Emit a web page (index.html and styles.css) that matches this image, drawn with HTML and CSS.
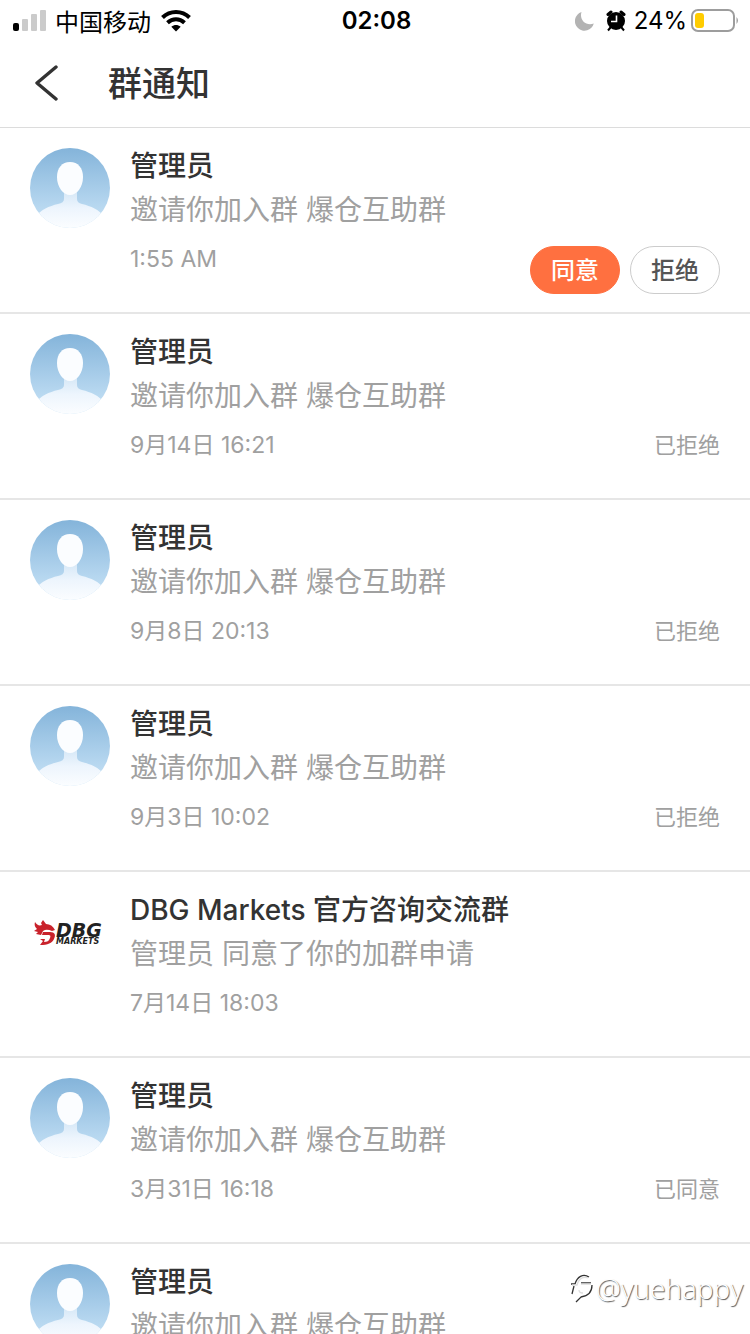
FILE: index.html
```html
<!DOCTYPE html>
<html lang="zh-CN">
<head>
<meta charset="utf-8">
<meta name="viewport" content="width=device-width, initial-scale=1">
<title>群通知</title>
<link rel="stylesheet" href="styles.css">
</head>
<body>
<svg class="defs" width="0" height="0" aria-hidden="true">
  <defs>
    <linearGradient id="sky" x1="0" y1="0" x2="0" y2="1">
      <stop offset="0" stop-color="#84b4da"/>
      <stop offset="0.7" stop-color="#b5d6ef"/>
      <stop offset="1" stop-color="#c8e2f5"/>
    </linearGradient>
    <linearGradient id="torso" gradientUnits="userSpaceOnUse" x1="0" y1="44" x2="0" y2="80">
      <stop offset="0" stop-color="#d6e8f7"/>
      <stop offset="0.45" stop-color="#edf5fd"/>
      <stop offset="1" stop-color="#fbfdff"/>
    </linearGradient>
    <clipPath id="round"><circle cx="40" cy="40" r="40"/></clipPath>
    <symbol id="person" viewBox="0 0 80 80">
      <g clip-path="url(#round)">
        <rect width="80" height="80" fill="url(#sky)"/>
        <path d="M34 42h13v9q0 4 5 5c9 2 17 6 22 12v14H6V68c5-6 13-10 22-12q6-1 6-5z" fill="url(#torso)"/>
        <path d="M40 14c8 0 13 6 13 15 0 10-6 18-13 18s-13-8-13-18c0-9 5-15 13-15z" fill="#fbfdff"/>
      </g>
    </symbol>
  </defs>
</svg>
<div class="app">
  <div class="status">
    <div class="status-side">
      <svg class="signal" width="34" height="22" viewBox="0 0 34 22"><rect x="0" y="13" width="6" height="8" rx="2"/><g fill="#cbcbcb"><rect x="9" y="9" width="6" height="12" rx="1"/><rect x="18" y="4" width="6" height="17" rx="1"/><rect x="27" y="0" width="6" height="21" rx="1"/></g></svg>
      <span class="carrier">中国移动</span>
      <svg width="30" height="22" viewBox="0 0 30 22" fill="none" stroke="#000" stroke-width="4"><path d="M1.500 7.500C9 .2 21 .2 28.500 7.500"/><path d="M6.500 12.700c5-4.600 12-4.600 17 0"/><path d="M10.300 16.800c3-2.500 6.400-2.500 9.400 0L15 21.500z" fill="#000" stroke="none"/></svg>
    </div>
    <time class="clock">02:08</time>
    <div class="status-side status-right">
      <svg width="20" height="20" viewBox="0 0 20 20"><path d="M6.500 1A9.600 9.600 0 1 0 18.800 12.600C11 15.500 4 9 6.500 1z" fill="#b3b3b3"/></svg>
      <svg class="alarm" width="20" height="22" viewBox="0 0 20 22"><circle cx="10" cy="11" r="9"/><path d="M2 4.500 5 2M18 4.500 15 2" stroke="#000" stroke-width="3" stroke-linecap="round"/><path d="m4.500 17.500-2.500 3M15.500 17.500l2.500 3" stroke="#000" stroke-width="2"/><path d="M10.500 5.500v6H5" fill="none" stroke="#fff" stroke-width="1.600"/></svg>
      <span class="percent">24%</span>
      <svg width="49" height="24" viewBox="0 0 49 24"><rect x="1" y="1" width="42" height="21" rx="6" fill="#fff" stroke="#9d9d9d" stroke-width="2"/><rect x="4" y="4" width="9" height="15" rx="3" fill="#fc0"/><path d="M45.500 8q3 3.500 0 7z" fill="#9d9d9d"/></svg>
    </div>
  </div>
  <header class="header">
    <button class="back" aria-label="返回"><svg width="26" height="38" viewBox="0 0 26 38" fill="none" stroke="#333" stroke-width="3.400" stroke-linecap="round" stroke-linejoin="round"><path d="M22 2 3 18l19 16"/></svg></button>
    <h1 class="heading">群通知</h1>
  </header>
  <main class="list">
    <article class="item">
      <svg class="avatar" aria-hidden="true"><use href="#person"/></svg>
      <div class="body"><h2 class="title">管理员</h2><p class="text">邀请你加入群 爆仓互助群</p>
      <div class="foot"><time class="meta date">1:55 AM</time><div class="actions"><button class="pill accept">同意</button><button class="pill">拒绝</button></div></div></div>
    </article>
    <article class="item">
      <svg class="avatar" aria-hidden="true"><use href="#person"/></svg>
      <div class="body"><h2 class="title">管理员</h2><p class="text">邀请你加入群 爆仓互助群</p>
      <div class="foot"><time class="meta date">9月14日 16:21</time><span class="meta">已拒绝</span></div></div>
    </article>
    <article class="item">
      <svg class="avatar" aria-hidden="true"><use href="#person"/></svg>
      <div class="body"><h2 class="title">管理员</h2><p class="text">邀请你加入群 爆仓互助群</p>
      <div class="foot"><time class="meta date">9月8日 20:13</time><span class="meta">已拒绝</span></div></div>
    </article>
    <article class="item">
      <svg class="avatar" aria-hidden="true"><use href="#person"/></svg>
      <div class="body"><h2 class="title">管理员</h2><p class="text">邀请你加入群 爆仓互助群</p>
      <div class="foot"><time class="meta date">9月3日 10:02</time><span class="meta">已拒绝</span></div></div>
    </article>
    <article class="item">
      <svg class="avatar" viewBox="0 0 80 80" role="img" aria-label="DBG Markets">
        <path d="M5 30c2 3 4 4 7 3l-1-2 2-3 3 4c4 0 7 2 9 6l-3 1c-3-1-6-2-9 0l-2 4-5-1 2-2-4-1 3-2c-2-2-3-4-2-7z" fill="#c9222b"/>
        <path d="M13 40h7c5 0 6 3 4 7-2 4-6 6-14 6l3-4-3-2h5l-1 3c3 0 5-1 6-4s0-3-3-3h-5z" fill="#c9222b"/>
        <text class="logo-main" x="26" y="45">DBG</text>
        <text class="logo-sub" x="26" y="52">MARKETS</text>
      </svg>
      <div class="body"><h2 class="title">DBG Markets 官方咨询交流群</h2><p class="text">管理员 同意了你的加群申请</p>
      <div class="foot"><time class="meta date">7月14日 18:03</time></div></div>
    </article>
    <article class="item">
      <svg class="avatar" aria-hidden="true"><use href="#person"/></svg>
      <div class="body"><h2 class="title">管理员</h2><p class="text">邀请你加入群 爆仓互助群</p>
      <div class="foot"><time class="meta date">3月31日 16:18</time><span class="meta">已同意</span></div></div>
    </article>
    <article class="item">
      <svg class="avatar" aria-hidden="true"><use href="#person"/></svg>
      <div class="body"><h2 class="title">管理员</h2><p class="text">邀请你加入群 爆仓互助群</p>
      <div class="foot"></div></div>
    </article>
  </main>
  <div class="watermark">
    <svg width="24" height="30" viewBox="0 0 24 30" fill="none" stroke-width="1.300"><path d="M1 11h4C7 4 13 0 19 4M11 10h10M4 13 2 21M22 12c0 7-4 11-11 12l-5 5" stroke="#333"/><path d="M2 12h5C9 5 14 3 18 5M11 11h10M9 17q0 3 4 3" stroke="#ddd"/></svg>
    <span>@yuehappy</span>
  </div>
</div>
</body>
</html>
```
FILE: styles.css
```css
* { box-sizing: border-box; }

body {
  margin: 0;
  background: #fff;
  color: #333;
  font-family: Inter, "Noto Sans CJK SC", sans-serif;
}

h1, h2, p { margin: 0; }
button { font-family: inherit; cursor: pointer; }
svg { flex: none; }
.defs { position: absolute; }

.app {
  position: relative;
  display: flex;
  flex-direction: column;
  height: 100vh;
  overflow: hidden;
}

.status {
  display: grid;
  grid-template-columns: 1fr auto 1fr;
  align-items: center;
  height: 40px;
  padding: 1px 10px 0 13px;
  color: #000;
  font-size: 24px;
  line-height: 39px;
}

.status-side { display: flex; align-items: center; gap: 8px; }
.status-right { justify-content: flex-end; }
.carrier { font-family: "Noto Sans CJK SC", sans-serif; }
.carrier + svg { margin-left: 2px; }
.alarm { margin-left: 3px; }
.percent + svg { margin-left: -4px; }
.clock { font-weight: 600; }

.header {
  display: flex;
  flex: none;
  align-items: center;
  height: 88px;
  padding: 0 32px;
  border-bottom: 1px solid #dcdcdc;
}

.back {
  display: flex;
  width: 76px;
  padding: 0 2px;
  border: 0;
  background: none;
}

.heading { font-size: 34px; font-weight: 500; line-height: 48px; }

.list { flex: 1; min-height: 0; overflow: hidden; }

.item {
  display: flex;
  gap: 20px;
  padding: 20px 30px 18px;
  border-bottom: 2px solid #e6e6e6;
}

.avatar { width: 80px; height: 80px; }
.body { flex: 1; min-width: 0; }
.title { font-size: 28px; font-weight: 500; line-height: 36px; }

.text {
  margin-top: 8px;
  color: #a0a0a0;
  font-size: 28px;
  line-height: 36px;
}

.foot {
  display: flex;
  justify-content: space-between;
  min-height: 48px;
  margin-top: 18px;
}

.meta { color: #a0a0a0; font-size: 22px; line-height: 27px; }
.date { font-size: 23px; }
.actions { display: flex; gap: 10px; }

.pill {
  width: 90px;
  height: 48px;
  padding: 2px 0 0;
  border: 1px solid #ccc;
  border-radius: 24px;
  background: #fff;
  color: #555;
  font-size: 24px;
  font-weight: 500;
  line-height: 44px;
}

.accept { border-color: #ff7040; background: #ff7040; color: #fff; }

.logo-main { fill: #222; font: italic bold 19px "DejaVu Sans", sans-serif; }
.logo-sub { fill: #222; font: italic bold 8px "DejaVu Sans", sans-serif; }

.watermark {
  position: absolute;
  right: 7px;
  bottom: 28px;
  display: flex;
  align-items: center;
  gap: 2px;
  color: #fff;
  font-family: "Open Sans", sans-serif;
  font-size: 28px;
  font-weight: 300;
  line-height: 36px;
  text-shadow: 1px 1px 1px #555;
}
```
